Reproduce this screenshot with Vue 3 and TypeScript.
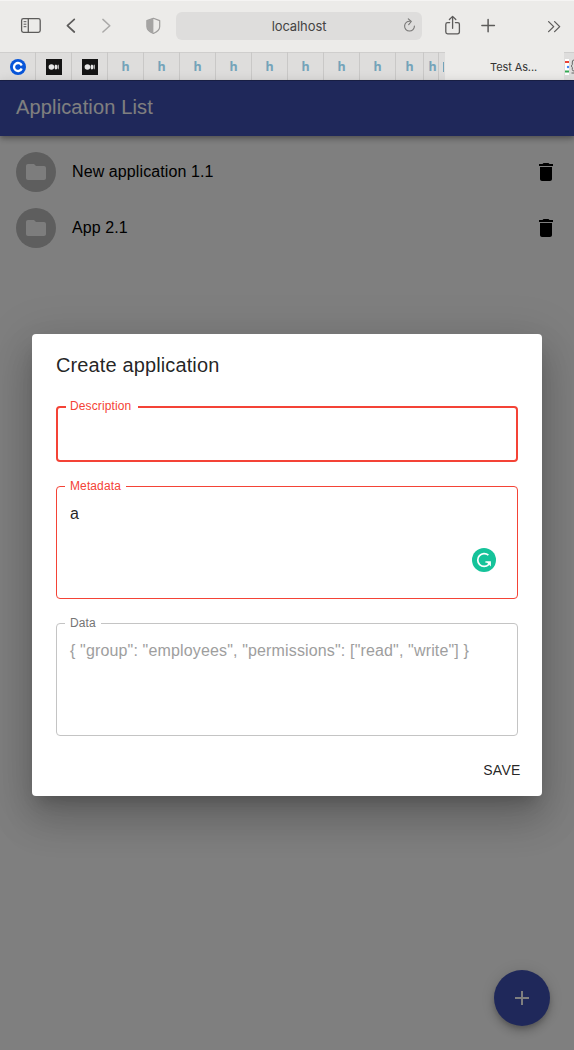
<script setup lang="ts">
interface Tab {
  kind: 'c' | 'm' | 'h' | 'sliver'
  width: number
}
const tabs: Tab[] = [
  { kind: 'c', width: 36 },
  { kind: 'm', width: 36 },
  { kind: 'm', width: 36 },
  ...Array.from({ length: 8 }, (): Tab => ({ kind: 'h', width: 36 })),
  { kind: 'h', width: 28 },
  { kind: 'h', width: 15 },
  { kind: 'sliver', width: 6 },
]
const applications: string[] = ['New application 1.1', 'App 2.1']
</script>

<template>
  <div class="window">
    <header class="toolbar">
      <svg class="tools" width="574" height="52" viewBox="0 0 574 52" fill="none" stroke="#5c5b5a" stroke-width="1.3" stroke-linecap="round" stroke-linejoin="round">
        <rect x="21.6" y="18.6" width="18.6" height="13.7" rx="1.8" />
        <path d="M28.3 18.6V32.3" />
        <path d="M24 21.7h2M24 24.2h2M24 26.7h2" stroke-width="1" />
        <path d="M74.3 19.4L67.4 25.7L74.3 32" stroke-width="1.7" />
        <path d="M102.9 19.4L109.8 25.7L102.9 32" stroke="#aaa9a8" stroke-width="1.5" />
        <path d="M153.4 18.3L159.7 20.6V26.6C159.7 30 156.7 32.2 153.4 33.5C150.1 32.2 146.9 30 146.9 26.6V20.6Z" stroke="#9e9d9c" stroke-width="1.2" />
        <path d="M153.4 18.3V33.5C150.1 32.2 146.9 30 146.9 26.6V20.6Z" fill="#a5a4a3" stroke="none" />
        <rect x="176" y="12" width="246" height="28" rx="6" fill="#dedddc" stroke="none" />
        <path d="M410 21.3A4.9 4.9 0 1 0 414.4 26" stroke="#777675" stroke-width="1.1" />
        <path d="M408.3 18.9L411.3 21.5L408.7 24.6" stroke="#777675" stroke-width="1.1" />
        <path d="M449.7 22.6H447.6Q445.8 22.6 445.8 24.4V32Q445.8 33.8 447.6 33.8H457.5Q459.4 33.8 459.4 32V24.4Q459.4 22.6 457.5 22.6H455.4M452.6 28.3V16.8M449.4 19.5L452.6 16.4L455.8 19.5" />
        <path d="M481.9 25.6H494.4M488.1 19.4V31.8" stroke-width="1.5" />
        <path d="M548.6 21.6L553.7 26.6L548.6 31.6M554.6 21.6L559.7 26.6L554.6 31.6" stroke-width="1.3" />
      </svg>
      <span class="address">localhost</span>
    </header>

    <nav class="tabs">
      <div v-for="(tab, i) in tabs" :key="i" class="tab" :style="{ width: tab.width + 'px' }">
        <span v-if="tab.kind === 'h'" class="h-icon">h</span>
        <svg v-else-if="tab.kind === 'c'" width="16" height="16" viewBox="0 0 16 16">
          <circle cx="8" cy="8" r="8" fill="#0755d9" />
          <path d="M11.7 6.5A4 4 0 1 0 11.7 9.5" fill="none" stroke="#fff" stroke-width="2.3" />
        </svg>
        <svg v-else-if="tab.kind === 'm'" width="16" height="16" viewBox="0 0 16 16">
          <rect width="16" height="16" fill="#151515" />
          <circle cx="5.4" cy="8" r="2.8" fill="#e8e8e8" />
          <ellipse cx="9.9" cy="8" rx="1.4" ry="2.6" fill="#e8e8e8" />
          <ellipse cx="12.2" cy="8" rx=".7" ry="2.4" fill="#ccc" />
        </svg>
        <i v-else class="sliver"></i>
      </div>
      <div class="tab-active">Test As...</div>
      <svg class="last-tab" width="10" height="28" viewBox="0 0 10 28">
        <rect x="1" y="7" width="4" height="16" fill="#fff" />
        <path d="M1 9h4v2H1z" fill="#ea4335" />
        <path d="M1 18.5h4v2H1z" fill="#34a853" />
        <circle cx="4" cy="15" r="1.2" fill="#4285f4" />
        <path d="M10 8Q8.3 8 8.3 10V12.5L7.3 14L8.3 15.5V17.5Q8.3 19 10 19M7.5 21H10" fill="none" stroke="#666" stroke-width="1" />
      </svg>
    </nav>

    <main class="page">
      <div class="appbar">Application List</div>
      <ul class="list">
        <li v-for="name in applications" :key="name" class="item">
          <span class="avatar">
            <svg width="24" height="24" viewBox="0 0 24 24" fill="#fafafa"><path d="M10 4H4c-1.1 0-1.99.9-1.99 2L2 18c0 1.1.9 2 2 2h16c1.1 0 2-.9 2-2V8c0-1.1-.9-2-2-2h-8l-2-2z" /></svg>
          </span>
          <span class="name">{{ name }}</span>
          <svg width="24" height="24" viewBox="0 0 24 24"><path d="M6 19c0 1.1.9 2 2 2h8c1.1 0 2-.9 2-2V7H6v12zM19 4h-3.5l-1-1h-5l-1 1H5v2h14V4z" /></svg>
        </li>
      </ul>
      <button class="fab" aria-label="Add">
        <svg width="24" height="24" viewBox="0 0 24 24" fill="#fff"><path d="M19 13h-6v6h-2v-6H5v-2h6V5h2v6h6v2z" /></svg>
      </button>

      <div class="backdrop">
        <section class="dialog">
          <h2>Create application</h2>
          <div class="field focused"><label>Description</label></div>
          <div class="field area error"><label>Metadata</label><span>a</span>
            <svg class="grammar" width="24" height="24" viewBox="0 0 24 24">
              <circle cx="12" cy="12" r="12" fill="#15c39a" />
              <path d="M16.4 7.2A6.4 6.4 0 1 0 16.6 16.6L18 14.6" fill="none" stroke="#fff" stroke-width="1.7" />
              <path d="M13.4 13.2H18.9V18.4L17.2 16.8L15 14.8H13.4Z" fill="#fff" />
            </svg>
          </div>
          <div class="field area"><label>Data</label><span class="placeholder">{ "group": "employees", "permissions": ["read", "write"] }</span></div>
          <div class="actions"><button class="save">SAVE</button></div>
        </section>
      </div>
    </main>
  </div>
</template>

<style>
body { margin: 0; overflow: hidden; }
</style>

<style scoped>
* { box-sizing: border-box; }
.window { width: 574px; height: 1050px; overflow: hidden; font-family: "Liberation Sans", Arial, sans-serif; }
.toolbar { height: 52px; background: #ecebe9; border-top: 1px solid #f5f4f3; position: relative; display: flex; justify-content: center; }
.tools { position: absolute; left: 0; top: -1px; }
.address { position: relative; left: 12px; font: 13px/50px Inter, sans-serif; color: #454443; letter-spacing: -0.1px; }
.tabs { height: 28px; display: flex; background: #dedddc; box-shadow: inset 0 1px #cfcecd; }
.tab { flex: none; display: flex; align-items: center; justify-content: center; border-right: 1px solid #c9c8c7; padding-top: 1px; overflow: hidden; }
.h-icon { font: bold 12.5px/18px "Noto Sans", sans-serif; color: #73a3b9; padding-top: 1px; }
.tab:nth-child(13) { padding-left: 3px; }
.sliver { width: 1px; height: 10px; background: #73a3b9; margin-left: 3px; }
.tab:nth-child(14) { border: 0; }
.tab-active { flex: none; width: 119px; background: #ecebe9; font: 11px/30px Inter, sans-serif; color: #333; padding-left: 45px; letter-spacing: -0.1px; }
.last-tab { flex: none; }
.page { height: 970px; position: relative; background: #fff; }
.appbar { height: 56px; padding-left: 16px; border-top: 1px solid #303c87; background: #3f51b5; color: #fff; font-size: 20px; line-height: 53px; letter-spacing: 0.15px; box-shadow: 0 2px 4px -1px rgba(0,0,0,.2), 0 4px 5px rgba(0,0,0,.14), 0 1px 10px rgba(0,0,0,.12); }
.list { list-style: none; margin: 0; padding: 8px 16px; }
.item { height: 56px; display: flex; align-items: center; }
.avatar { width: 40px; height: 40px; border-radius: 50%; background: #bdbdbd; display: flex; align-items: center; justify-content: center; }
.name { flex: 1; margin-left: 16px; font-size: 16px; letter-spacing: 0.1px; color: #000; }
.fab { position: absolute; right: 24px; bottom: 24px; width: 56px; height: 56px; padding: 0; border: 0; border-radius: 50%; background: #3f51b5; display: flex; align-items: center; justify-content: center; box-shadow: 0 3px 5px -1px rgba(0,0,0,.2), 0 6px 10px rgba(0,0,0,.14), 0 1px 18px rgba(0,0,0,.12); }
.backdrop { position: absolute; inset: 0; background: rgba(0,0,0,.5); display: flex; align-items: center; justify-content: center; overflow: hidden; }
.dialog { width: 510px; height: 462px; padding: 15px 24px 8px; background: #fff; border-radius: 4px; color: rgba(0,0,0,.87); box-shadow: 0 11px 15px -7px rgba(0,0,0,.2), 0 24px 38px 3px rgba(0,0,0,.14), 0 9px 46px 8px rgba(0,0,0,.12); }
h2 { margin: 0 0 25px; font-size: 20px; font-weight: 400; line-height: 32px; letter-spacing: 0.12px; }
.field { position: relative; height: 56px; border: 1px solid #c4c4c4; border-radius: 4px; margin-bottom: 24px; padding: 17px 13px; font-size: 16px; line-height: 19px; letter-spacing: 0.15px; }
.field label { position: absolute; left: 8px; top: -9px; padding: 0 5px; background: #fff; font-size: 12px; line-height: 16px; letter-spacing: 0.11px; color: #757575; }
.area { height: 113px; }
.focused { border: 2px solid #f44336; }
.focused label { top: -10px; color: #f44336; padding: 0 7px 0 4px; }
.error { border-color: #f44336; }
.error label { color: #f44336; }
.placeholder { color: #9e9e9e; }
.grammar { position: absolute; right: 21px; top: 61px; }
.actions { display: flex; justify-content: flex-end; margin-top: -8px; }
.save { width: 64px; height: 36px; margin-right: -16px; padding: 0; border: 0; background: none; font: 14px/36px "Liberation Sans", Arial, sans-serif; letter-spacing: 0.3px; color: rgba(0,0,0,.87); }
</style>
